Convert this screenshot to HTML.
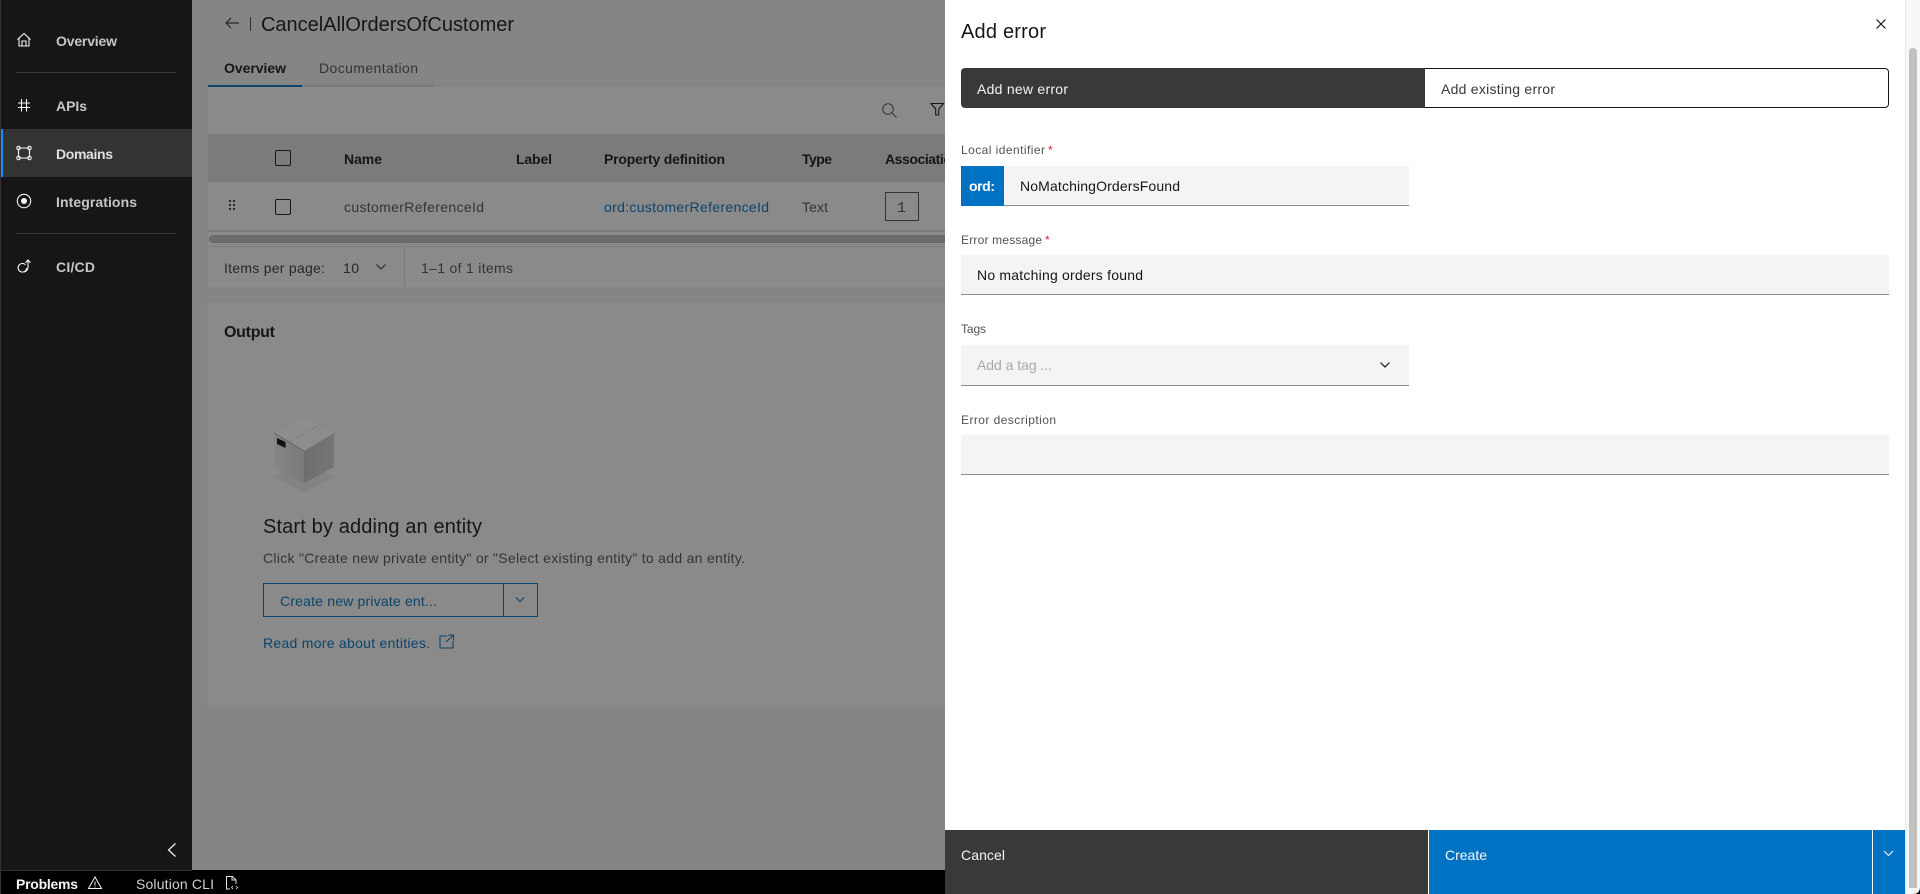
<!DOCTYPE html>
<html lang="en"><head><meta charset="utf-8"><title>Add error</title>
<style>
html,body{margin:0;padding:0;width:1920px;height:894px;overflow:hidden;background:#000}
body{position:relative;font-family:"Liberation Sans",sans-serif}
.b{position:absolute}
svg.l{position:absolute;left:0;top:0;width:1920px;height:894px;overflow:hidden}
text{font-family:"Liberation Sans",sans-serif;font-size:14px}
.h{font-weight:700}
</style></head><body>

<!-- main content -->
<div class="b" style="left:192px;top:0;width:753px;height:870px;background:#f4f4f4"></div>
<div class="b" style="left:208px;top:87px;width:737px;height:200px;background:#fff"></div>
<div class="b" style="left:208px;top:134px;width:737px;height:48px;background:#e0e0e0"></div>
<div class="b" style="left:208px;top:230px;width:737px;height:2px;background:#e0e0e0"></div>
<div class="b" style="left:209px;top:235px;width:736px;height:8px;border-radius:4px 0 0 4px;background:#c1c1c1"></div>
<div class="b" style="left:208px;top:246px;width:737px;height:1px;background:#e0e0e0"></div>
<div class="b" style="left:404px;top:247px;width:1px;height:40px;background:#e0e0e0"></div>
<div class="b" style="left:208px;top:85px;width:94px;height:2px;background:#0072c3"></div>
<div class="b" style="left:302px;top:85px;width:132px;height:2px;background:#e0e0e0"></div>
<div class="b" style="left:207px;top:303px;width:738px;height:404px;background:#fff"></div>
<div class="b" style="left:275px;top:150px;width:14px;height:14px;border:1px solid #161616;border-radius:2px"></div>
<div class="b" style="left:275px;top:199px;width:14px;height:14px;border:1px solid #161616;border-radius:2px"></div>
<div class="b" style="left:885px;top:192px;width:32px;height:27px;border:1px solid #525252"></div>
<div class="b" style="left:263px;top:583px;width:273px;height:32px;border:1px solid #0072c3"></div>
<div class="b" style="left:503px;top:584px;width:1px;height:32px;background:#0072c3"></div>

<svg class="l" viewBox="0 0 1920 894" style="clip-path:inset(0 975px 0 0)">
<text x="261" y="31" style="font-size:20px" fill="#161616" textLength="253">CancelAllOrdersOfCustomer</text>
<path d="M239 23H226M231 18l-5 5 5 5" fill="none" stroke="#393939" stroke-width="1.2"/>
<rect x="250" y="17" width="1" height="14" fill="#525252"/>
<text class="h" x="224" y="73" fill="#161616" textLength="62">Overview</text>
<text x="319" y="73" fill="#525252" textLength="99">Documentation</text>
<circle cx="888" cy="109" r="5.3" fill="none" stroke="#525252" stroke-width="1"/><path d="M892 113l4.500 4.500" stroke="#525252" stroke-width="1"/>
<path d="M931 103.500h12.500l-4.800 5.500v6h-3v-6z" fill="none" stroke="#161616" stroke-width="1.100"/>
<text class="h" x="344" y="164" fill="#161616" textLength="38">Name</text>
<text class="h" x="516" y="164" fill="#161616" textLength="36">Label</text>
<text class="h" x="604" y="164" fill="#161616" textLength="121">Property definition</text>
<text class="h" x="802" y="164" fill="#161616" textLength="30">Type</text>
<text class="h" x="885" y="164" fill="#161616" textLength="75">Association</text>
<g fill="#393939"><rect x="229" y="200" width="2" height="2"/><rect x="233" y="200" width="2" height="2"/><rect x="229" y="204" width="2" height="2"/><rect x="233" y="204" width="2" height="2"/><rect x="229" y="208" width="2" height="2"/><rect x="233" y="208" width="2" height="2"/></g>
<text x="344" y="212" fill="#525252" textLength="140">customerReferenceId</text>
<text x="604" y="212" fill="#0072c3" textLength="165">ord:customerReferenceId</text>
<text x="802" y="212" fill="#525252" textLength="26">Text</text>
<text x="897" y="212" fill="#525252" style="font-size:15px;font-family:'Liberation Mono',monospace">1</text>
<text x="224" y="273" fill="#393939" textLength="101">Items per page:</text>
<text x="343" y="273" fill="#393939" textLength="16">10</text>
<path d="M376.500 264.500l4.500 4.500 4.500-4.500" fill="none" stroke="#393939" stroke-width="1.100"/>
<text x="421" y="273" fill="#525252" textLength="92">1–1 of 1 items</text>
<text class="h" x="224" y="337" style="font-size:16px" fill="#161616" textLength="51">Output</text>
<text x="263" y="533" style="font-size:20px" fill="#161616" textLength="219">Start by adding an entity</text>
<text x="263" y="563" fill="#525252" textLength="482">Click "Create new private entity" or "Select existing entity" to add an entity.</text>
<text x="280" y="606" fill="#0072c3" textLength="157">Create new private ent...</text>
<path d="M516 597.500l4 4 4-4" fill="none" stroke="#0072c3" stroke-width="1.100"/>
<text x="263" y="648" fill="#0072c3" textLength="167">Read more about entities.</text>
<path d="M447 636h-7v12h13v-7M446 642l7-6.500M448 635h5.500v5.500" fill="none" stroke="#0072c3" stroke-width="1.100"/>
</svg>

<!-- scrim -->
<div class="b" style="left:0;top:0;width:1920px;height:870px;background:rgba(22,22,22,.5)"></div>

<!-- illustration -->
<svg class="l" viewBox="0 0 1920 894">
<defs>
<linearGradient id="gl" x1="0" x2="1" y1="0" y2="0"><stop offset="0" stop-color="#858585"/><stop offset="1" stop-color="#7a7a7a"/></linearGradient>
<linearGradient id="gr" x1="0" x2="1" y1="0" y2="0"><stop offset="0" stop-color="#6e6e6e"/><stop offset="1" stop-color="#767676"/></linearGradient>
</defs>
<path d="M304 493l-30-16 30-16 30 16z" fill="#838383"/>
<path d="M304 417l30 16-30 18-30-18z" fill="#8d8d8d"/>
<path d="M274 433l30 18v32l-30-16z" fill="url(#gl)"/>
<path d="M334 433l-30 18v32l30-16z" fill="url(#gr)"/>
<path d="M274 433l30 18" stroke="#555" stroke-width=".7" fill="none"/>
<path d="M289 442l30-17" stroke="#7a7a7a" stroke-width=".6" fill="none"/>
<path d="M277 438l8.500 4v6l-8.500-4z" fill="#111"/>
</svg>

<!-- sidebar -->
<div class="b" style="left:0;top:0;width:192px;height:870px;background:#161616"></div>
<div class="b" style="left:0;top:0;width:1px;height:894px;background:#333"></div>
<div class="b" style="left:1px;top:129px;width:191px;height:48px;background:#333"></div>
<div class="b" style="left:1px;top:129px;width:2px;height:48px;background:#1a8cff"></div>
<div class="b" style="left:16px;top:72px;width:160px;height:1px;background:#393939"></div>
<div class="b" style="left:16px;top:233px;width:160px;height:1px;background:#393939"></div>

<!-- status bar -->
<div class="b" style="left:0;top:870px;width:192px;height:1px;background:#333"></div>

<svg class="l" viewBox="0 0 1920 894">
<g fill="none" stroke="#f4f4f4" stroke-width="1.100">
<path d="M17.500 39.500L24 33.500l6.500 6M19 38.500v7.500h10v-7.500M22 46v-5h4v5"/>
<path d="M18 103h12M18 107.500h12M21.500 99v12.500M26.500 99v12.500"/>
<path d="M19 148h10M19 158h10M18.500 148.500v9M29.500 148.500v9"/>
<circle cx="18.500" cy="148" r="1.700"/><circle cx="29.500" cy="148" r="1.700"/><circle cx="18.500" cy="158" r="1.700"/><circle cx="29.500" cy="158" r="1.700"/>
<circle cx="24" cy="201" r="6.700"/>
<path d="M25.500 264.800a4.300 4.300 0 1 0 1.200 3.200"/>
<path d="M28 260.500v6c0 3-1.500 5-4 5.500M25.500 262.800l2.500-2.800 2.500 2.800"/>
</g>
<circle cx="24" cy="201" r="3" fill="#f4f4f4"/>
<text class="h" x="56" y="46" fill="#c6c6c6" textLength="61">Overview</text>
<text class="h" x="56" y="111" fill="#c6c6c6" textLength="31">APIs</text>
<text class="h" x="56" y="159" fill="#e0e0e0" textLength="57">Domains</text>
<text class="h" x="56" y="207" fill="#c6c6c6" textLength="81">Integrations</text>
<text class="h" x="56" y="272" fill="#c6c6c6" textLength="39">CI/CD</text>
<path d="M175.500 843.500L168.500 850l7 6.500" fill="none" stroke="#f4f4f4" stroke-width="1.200"/>
<text class="h" x="16" y="889" fill="#f4f4f4" textLength="62">Problems</text>
<path d="M95 877l6.500 11.500h-13zM95 881.500v4M95 886.500v1" fill="none" stroke="#f4f4f4" stroke-width="1"/>
<text x="136" y="889" fill="#d0d0d0" textLength="78">Solution CLI</text>
<path d="M230 889h-3.500v-12.500h6l3.500 3.500v4M232 876.500v3.500h4" fill="none" stroke="#e0e0e0" stroke-width="1"/>
<path d="M233 886l-1.500 1.500 1.500 1.500M236 886l1.500 1.500-1.500 1.500" fill="none" stroke="#e0e0e0" stroke-width=".8"/>
</svg>

<!-- panel -->
<div class="b" style="left:945px;top:0;width:960px;height:894px;background:#fff"></div>
<div class="b" style="left:1905px;top:0;width:15px;height:894px;background:#f8f8f8;border-left:1px solid #e8e8e8;box-sizing:border-box"></div>
<div class="b" style="left:1909px;top:48px;width:8px;height:840px;background:#c1c1c1;border-radius:4px 4px 0 0"></div>

<div class="b" style="left:961px;top:68px;width:464px;height:40px;background:#393939;border-radius:4px 0 0 4px"></div>
<div class="b" style="left:1425px;top:68px;width:464px;height:40px;box-sizing:border-box;border:1.500px solid #161616;border-left:none;border-radius:0 4px 4px 0"></div>
<div class="b" style="left:961px;top:166px;width:448px;height:40px;box-sizing:border-box;background:#f4f4f4;border-bottom:1px solid #8d8d8d"></div>
<div class="b" style="left:961px;top:166px;width:43px;height:40px;background:#0072c3"></div>
<div class="b" style="left:961px;top:255px;width:928px;height:40px;box-sizing:border-box;background:#f4f4f4;border-bottom:1px solid #8d8d8d"></div>
<div class="b" style="left:961px;top:345px;width:448px;height:41px;box-sizing:border-box;background:#f4f4f4;border-bottom:1px solid #8d8d8d"></div>
<div class="b" style="left:961px;top:435px;width:928px;height:40px;box-sizing:border-box;background:#f4f4f4;border-bottom:1px solid #8d8d8d"></div>

<div class="b" style="left:945px;top:830px;width:483px;height:64px;background:#393939"></div>
<div class="b" style="left:1429px;top:830px;width:443px;height:64px;background:#0072c3"></div>
<div class="b" style="left:1873px;top:830px;width:32px;height:64px;background:#0072c3"></div>

<svg class="l" viewBox="0 0 1920 894">
<text x="961" y="38" style="font-size:20px" fill="#161616" textLength="85">Add error</text>
<path d="M1876.500 19.500l9 9M1885.500 19.500l-9 9" stroke="#161616" stroke-width="1.200" fill="none"/>
<text x="977" y="94" fill="#f4f4f4" textLength="91">Add new error</text>
<text x="1441" y="94" fill="#393939" textLength="114">Add existing error</text>
<text x="961" y="154" style="font-size:12px" fill="#525252" textLength="84">Local identifier</text>
<text x="1048" y="154" style="font-size:12px" fill="#da1e28">*</text>
<text class="h" x="969" y="191" fill="#fff" textLength="26">ord:</text>
<text x="1020" y="191" fill="#161616" textLength="160">NoMatchingOrdersFound</text>
<text x="961" y="244" style="font-size:12px" fill="#525252" textLength="81">Error message</text>
<text x="1045" y="244" style="font-size:12px" fill="#da1e28">*</text>
<text x="977" y="280" fill="#161616" textLength="166">No matching orders found</text>
<text x="961" y="333" style="font-size:12px" fill="#525252" textLength="25">Tags</text>
<text x="977" y="370" fill="#a8a8a8" textLength="75">Add a tag ...</text>
<path d="M1380.500 362.500l4.500 4.500 4.500-4.500" fill="none" stroke="#161616" stroke-width="1.200"/>
<text x="961" y="424" style="font-size:12px" fill="#525252" textLength="95">Error description</text>
<text x="961" y="860" fill="#f4f4f4" textLength="44">Cancel</text>
<text x="1445" y="860" fill="#f4f4f4" textLength="42">Create</text>
<path d="M1884 851l4.500 4.500 4.500-4.500" fill="none" stroke="#f4f4f4" stroke-width="1.100"/>
<path d="M1920 887v7h-7q7 0 7-7z" fill="#000"/>
</svg>
</body></html>
